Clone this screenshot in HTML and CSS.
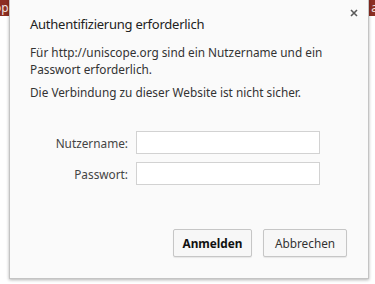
FILE: index.html
```html
<!DOCTYPE html>
<html lang="de">
<head>
<meta charset="utf-8">
<link rel="stylesheet" href="styles.css">
</head>
<body>
<div class="topbar"><span class="tb-left">op</span><span class="tb-right">al</span></div>
<div class="dialog">
  <button class="close" aria-label="Schließen">
    <svg width="8" height="8" viewBox="0 0 8 8"><path d="M1 1L7 7M7 1L1 7" stroke="#5a5a5a" stroke-width="1.6" fill="none"/></svg>
  </button>
  <h1 class="title">Authentifizierung erforderlich</h1>
  <p class="msg">Für http://uniscope.org sind ein Nutzername und ein Passwort erforderlich.</p>
  <p class="msg warn">Die Verbindung zu dieser Website ist nicht sicher.</p>
  <div class="form">
    <label class="lbl" for="u">Nutzername:</label>
    <input class="field" id="u" type="text">
    <label class="lbl" for="p">Passwort:</label>
    <input class="field" id="p" type="password">
  </div>
  <div class="actions">
    <button class="btn primary">Anmelden</button>
    <button class="btn secondary">Abbrechen</button>
  </div>
</div>
</body>
</html>
```
FILE: styles.css
```css
* { box-sizing: border-box; }
html, body { margin: 0; padding: 0; }
body {
  width: 375px;
  height: 284px;
  overflow: hidden;
  background: #ffffff;
  font-family: "Noto Sans", "Open Sans", sans-serif;
  position: relative;
}
.topbar {
  height: 16px;
  background: #8c2e22;
  color: #f3e6e3;
  font-size: 12px;
  line-height: 16px;
  display: flex;
  justify-content: space-between;
}
.tb-left { margin-left: -6px; }
.tb-right { margin-right: -6px; }
.dialog {
  position: absolute;
  left: 9px;
  top: -3px;
  width: 360px;
  height: 282px;
  background: #fafafa;
  border: 1px solid #c4c4c4;
  box-shadow: 0 1px 3px rgba(0,0,0,0.3);
  padding: 0 0 0 20px;
  display: flex;
  flex-direction: column;
}
.close {
  position: absolute;
  right: 9px;
  top: 11px;
  width: 9px;
  height: 9px;
  padding: 0;
  border: 0;
  background: none;
  display: flex;
}
.title {
  margin: 16px 0 0 0;
  font-size: 13px;
  letter-spacing: -0.25px;
  font-weight: 400;
  line-height: 20px;
  color: #222;
}
.msg {
  margin: 10px 0 0 0;
  font-size: 11.8px;
  line-height: 17px;
  color: #333;
  width: 300px;
}
.msg.warn { margin-top: 6px; }
.form {
  margin: 30px 0 0 0;
  display: grid;
  grid-template-columns: 98px 184px;
  column-gap: 8px;
  row-gap: 8px;
  align-items: center;
}
.lbl {
  text-align: right;
  font-size: 11.8px;
  color: #444;
}
.field {
  height: 23px;
  border: 1px solid #d2d2d2;
  background: #fff;
  margin: 0;
}
.actions {
  margin: 44px 21px 0 0;
  display: flex;
  justify-content: flex-end;
  gap: 11px;
}
.btn {
  height: 28px;
  padding: 0;
  font-family: inherit;
  font-size: 11.8px;
  color: #333;
  background: #f7f7f7;
  border: 1px solid #c6c6c6;
  border-radius: 2px;
  box-shadow: 0 1px 1px rgba(0,0,0,0.08);
}
.btn.primary { width: 79px; font-weight: 700; color: #111; }
.btn.secondary { width: 84px; }
```
